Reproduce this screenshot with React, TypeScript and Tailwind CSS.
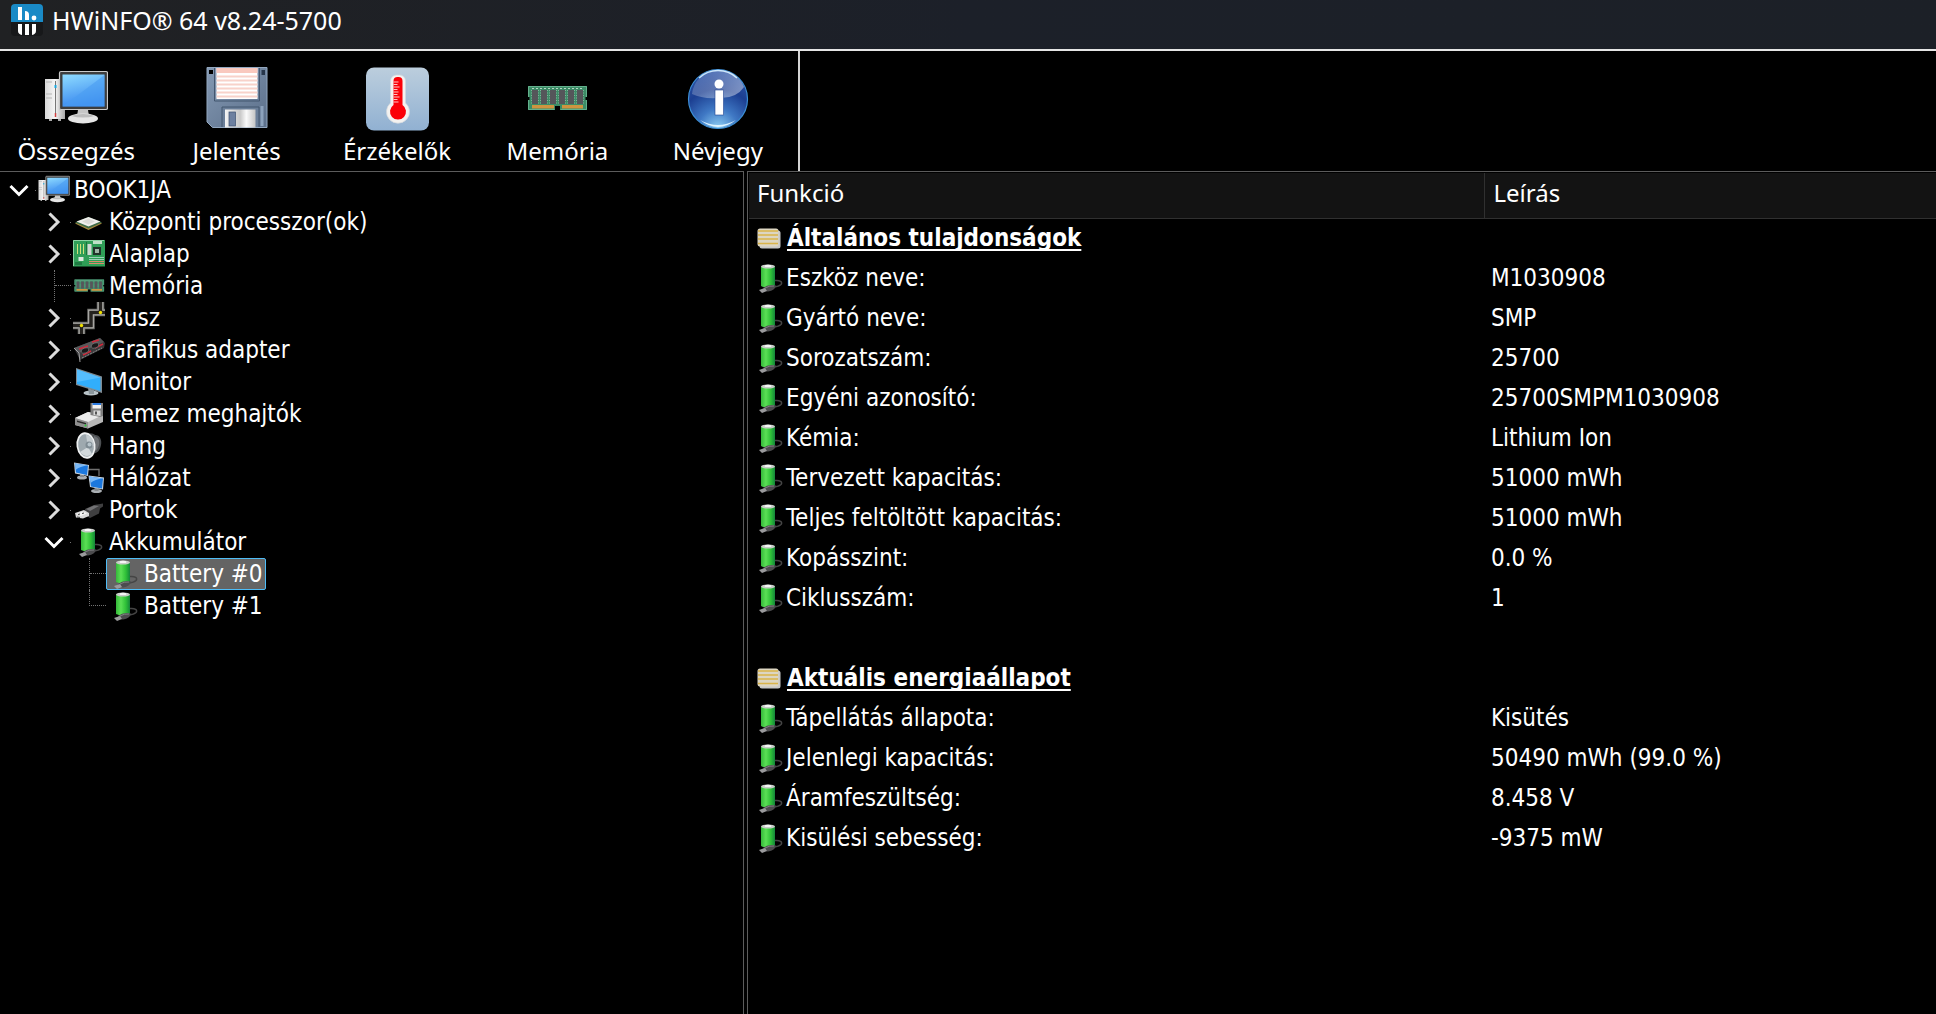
import { clsx } from "clsx";
import { Fragment, type ReactNode } from "react";

interface TreeNode {
  label: string;
  icon: ReactNode;
  expanded?: boolean;
  selected?: boolean;
  branch?: boolean;
  children?: TreeNode[];
}

interface PropertyGroup {
  title: string;
  rows: [string, string][];
}

function LogoIcon() {
  return (
    <svg className="size-8" viewBox="0 0 32 32" aria-hidden="true">
      <path d="M0 18V4a4 4 0 0 1 4-4h24a4 4 0 0 1 4 4v14z" fill="#1a8ac6" />
      <path d="M0 18h32v10a4 4 0 0 1-4 4H4a4 4 0 0 1-4-4z" fill="#17181a" />
      <rect x="7" y="3" width="4" height="13" fill="#fff" />
      <path d="M14 16V7q4 0 4 4v5z" fill="#fff" />
      <circle cx="23" cy="14" r="2.4" fill="#fff" />
      <path d="M7 20h4v11q-4-1-4-4zM14 20h4v11h-4zM21 20h4v7q0 3-4 4z" fill="#fff" />
    </svg>
  );
}

function ComputerIcon({ className }: { className: string }) {
  return (
    <svg className={className} viewBox="0 0 64 64" aria-hidden="true">
      <defs>
        <linearGradient id="pc-screen" x1="0" y1="0" x2="0.3" y2="1">
          <stop offset="0" stopColor="#8fdcff" />
          <stop offset="1" stopColor="#3b8af0" />
        </linearGradient>
        <linearGradient id="pc-tower" x1="0" y1="0" x2="1" y2="0">
          <stop offset="0" stopColor="#d8d8d8" />
          <stop offset="0.5" stopColor="#f6f6f6" />
          <stop offset="1" stopColor="#a8a8a8" />
        </linearGradient>
      </defs>
      <rect x="1" y="12" width="20" height="40" fill="url(#pc-tower)" />
      <path d="M2 15h6M2 27h6M2 31h6" stroke="#b5b5b5" />
      <path d="M11.500 14v34" stroke="#777" />
      <path d="M11.500 18v3" stroke="#18a8e0" strokeWidth="2" />
      <path d="M11.500 46v4" stroke="#d04040" strokeWidth="1.500" />
      <path d="M5 52h3v2H5zM14 52h3v2h-3z" fill="#aaa" />
      <path d="M34 43h10l1 6H33z" fill="#c6c6c6" />
      <ellipse cx="39" cy="51.500" rx="15" ry="5" fill="#e6e6e6" />
      <path d="M27 49q12-4 24 0q-12 3-24 0z" fill="#bdbdbd" />
      <rect x="15.500" y="4.500" width="48" height="38" rx="1.500" fill="#3d3d3d" stroke="#c9c9c9" strokeWidth="1.200" />
      <rect x="18.500" y="7.500" width="42" height="32" fill="url(#pc-screen)" />
      <path d="M18.500 39.500L60.500 8v31.500z" fill="#4a9df2" opacity="0.600" />
    </svg>
  );
}

function ReportIcon() {
  return (
    <svg className="size-16" viewBox="0 0 64 64" aria-hidden="true">
      <defs>
        <linearGradient id="floppy-body" x1="0" y1="0" x2="1" y2="1">
          <stop offset="0" stopColor="#8499b3" />
          <stop offset="1" stopColor="#5b6f8a" />
        </linearGradient>
        <linearGradient id="floppy-shutter" x1="0" y1="0" x2="1" y2="0">
          <stop offset="0" stopColor="#f4f4f4" />
          <stop offset="0.500" stopColor="#c9c9c9" />
          <stop offset="0.700" stopColor="#fafafa" />
          <stop offset="1" stopColor="#c4c4c4" />
        </linearGradient>
      </defs>
      <path d="M2 .5h60v60H7.500L2 55z" fill="url(#floppy-body)" stroke="#93a8c0" />
      <path d="M9.500 1v33h45V1" fill="none" stroke="#43566f" />
      <rect x="4" y="3" width="4" height="4" fill="#000" />
      <rect x="56.500" y="3" width="3.500" height="5" fill="#27364a" />
      <rect x="11.500" y="1" width="41" height="31" fill="#fff" />
      <rect x="11.500" y="1" width="41" height="5" fill="#f9c9bf" />
      <path d="M11.500 9.500h41M11.500 13.500h41M11.500 17.500h41M11.500 21.500h41M11.500 25.500h41M11.500 29.500h41" stroke="#f8d2ca" strokeWidth="1.800" />
      <path d="M17 60V40h37v20" fill="#6b7f99" stroke="#43566f" />
      <path d="M57 39v20" stroke="#8ca2bc" strokeWidth="3" />
      <rect x="20" y="42.500" width="30.500" height="18" fill="url(#floppy-shutter)" />
      <rect x="24" y="45" width="6.500" height="14" fill="#6d80a0" stroke="#3c5070" strokeWidth="0.700" />
    </svg>
  );
}

function SensorIcon() {
  return (
    <svg className="size-16" viewBox="0 0 64 64" aria-hidden="true">
      <defs>
        <linearGradient id="sensor-bg" x1="0" y1="0" x2="0" y2="1">
          <stop offset="0" stopColor="#bccedd" />
          <stop offset="1" stopColor="#91b1d2" />
        </linearGradient>
      </defs>
      <rect x="1" y="0.500" width="63" height="63" rx="8" fill="url(#sensor-bg)" />
      <path d="M25.500 14a6 6 0 0 1 6-6h3a6 6 0 0 1 6 6v22a11.500 11.500 0 1 1-15 0z" fill="#f4f2f0" stroke="#d2d8de" strokeWidth="0.700" />
      <path d="M28.500 14a4 4 0 0 1 4-4h1a4 4 0 0 1 4 4v24a8 8 0 1 1-9 0z" fill="#fb0007" />
      <path d="M28.500 15h5M28.500 17.500h4M28.500 20h6M28.500 22.500h4M28.500 25h5M28.500 27.500h4M28.500 30h6M28.500 32.500h4M28.500 35h5" stroke="#ffc4c4" />
    </svg>
  );
}

function MemoryIcon({ className }: { className: string }) {
  return (
    <svg className={className} viewBox="0 0 64 64" aria-hidden="true">
      <path d="M3 19h59v11h-1.500v3H62v10H35v-4h-5v4H3V33h1.500v-3H3z" fill="#3c8c66" />
      <path d="M3.500 30V19.500h58V30M3.500 33v9.500h26M35.500 42.500h26V33" fill="none" stroke="#63b08c" />
      <path d="M7 21.500h52" stroke="#b5d6c4" strokeDasharray="2 2" />
      <g fill="#55565a">
        <rect x="7" y="23" width="6" height="14" />
        <rect x="16" y="23" width="6" height="14" />
        <rect x="25" y="23" width="6" height="14" />
        <rect x="34" y="23" width="6" height="14" />
        <rect x="43" y="23" width="6" height="14" />
        <rect x="52" y="23" width="6" height="14" />
      </g>
      <path
        d="M6.500 23v14M13.500 23v14M15.500 23v14M22.500 23v14M24.500 23v14M31.500 23v14M33.500 23v14M40.500 23v14M42.500 23v14M49.500 23v14M51.500 23v14M58.500 23v14"
        stroke="#7fb399"
        strokeDasharray="1 1.500"
      />
      <path d="M7 38h22v3.500H7zM37 38h21v3.500H37z" fill="#cf9440" />
    </svg>
  );
}

function AboutIcon() {
  return (
    <svg className="size-16" viewBox="0 0 64 64" aria-hidden="true">
      <defs>
        <radialGradient id="about-bg" cx="0.500" cy="1" r="0.950">
          <stop offset="0" stopColor="#8fd0f5" />
          <stop offset="0.350" stopColor="#3f78c4" />
          <stop offset="0.700" stopColor="#1c3f92" />
          <stop offset="1" stopColor="#2c53a6" />
        </radialGradient>
        <linearGradient id="about-gloss" x1="0" y1="0" x2="1" y2="0.600">
          <stop offset="0" stopColor="#ffffff" stopOpacity="0.100" />
          <stop offset="1" stopColor="#ffffff" stopOpacity="0.400" />
        </linearGradient>
      </defs>
      <circle cx="32" cy="32" r="29.500" fill="url(#about-bg)" stroke="#3d8fd6" strokeWidth="1.200" />
      <path d="M13 11a28 28 0 0 1 38 0" fill="none" stroke="#bfe2fb" strokeWidth="1.500" />
      <path d="M6 27A27 27 0 0 1 58 20Q50 32 32 31Q16 32 6 27z" fill="url(#about-gloss)" />
      <path d="M14 53q18 10 36 0q-18 14-36 0z" fill="#dff4ff" />
      <circle cx="33" cy="17" r="4.500" fill="#fff" />
      <rect x="29" y="23" width="8.500" height="25" fill="#fff" stroke="#21448f" strokeWidth="0.600" />
    </svg>
  );
}

function CpuIcon() {
  return (
    <svg className="size-8" viewBox="0 0 32 32" aria-hidden="true">
      <path d="M2 17.500L15.500 24 29 17.500 15.500 12z" fill="#a8873c" />
      <path d="M2 16.500L15.500 22.500 29 16.500 15.500 11z" fill="#3e6a46" />
      <path d="M3.500 15.500L15.500 20.500 27.500 15.500 15.500 11z" fill="#f0efec" />
      <path d="M9 15.500l6.500 3 6.500-3-6.500-3z" fill="#dcdad6" />
    </svg>
  );
}

function BoardIcon() {
  return (
    <svg className="size-8" viewBox="0 0 32 32" aria-hidden="true">
      <rect y="2" width="32" height="26.500" fill="#2f9e57" />
      <path d="M.5 28V2.500H31" fill="none" stroke="#8ed3a4" />
      <path d="M4.500 6v10M7.500 6v10M10.500 6v10" stroke="#cfe07a" />
      <path d="M13.500 4v13" stroke="#1c6f3b" />
      <rect x="14.500" y="6" width="4" height="11" fill="#cfd8d2" />
      <rect x="20" y="3" width="9" height="3" fill="#bfe0c8" />
      <rect x="20" y="9" width="8" height="8" fill="#20332a" />
      <rect x="22" y="11" width="4" height="4" fill="#9db5a6" />
      <rect x="5.500" y="19" width="5" height="4" fill="#dbe8de" />
      <rect x="2" y="24" width="7" height="3" fill="#1f7a42" />
      <path d="M16 19.500h15M16 21.500h15" stroke="#9ad2b8" />
      <path d="M16 23.500h15M16 25.500h15" stroke="#d98a6b" />
    </svg>
  );
}

function BusIcon() {
  return (
    <svg className="size-8" viewBox="0 0 32 32" fill="none" aria-hidden="true">
      <g stroke="#6f6f6c" strokeWidth="7.500">
        <path d="M0 23.500h18V10.500h14" />
        <path d="M27.500 0v10M8.500 32v-8" />
      </g>
      <g stroke="#b9b8b4" strokeWidth="5.500">
        <path d="M0 23.500h18V10.500h14" />
        <path d="M27.500 0v10M8.500 32v-8" />
      </g>
      <g stroke="#24221f" strokeWidth="3.500">
        <path d="M0 23.500h18V10.500h14" />
        <path d="M27.500 0v10M8.500 32v-8" />
      </g>
      <circle cx="8.500" cy="23.500" r="1.700" fill="#efe000" />
      <circle cx="27.500" cy="10.500" r="1.700" fill="#efe000" />
    </svg>
  );
}

function GpuIcon() {
  return (
    <svg className="size-8" viewBox="0 0 32 32" fill="none" aria-hidden="true">
      <path d="M1 14L27 4l5 5-1 5L7 26z" fill="#3a3a3c" />
      <path d="M1 14L27 4l4 4L6 19z" fill="#58585a" />
      <path d="M1 14l5 5 1 9" stroke="#a0a0a0" />
      <path d="M6 15l9-3M19 8l7-2M10 21l8-4M22 14l8-4" stroke="#d0283a" strokeWidth="1.500" />
      <path d="M9 24l20-10" stroke="#8b8b8b" strokeDasharray="2 1" />
      <ellipse cx="12" cy="16.500" rx="4" ry="2.500" fill="#19191a" stroke="#838383" strokeWidth="0.600" transform="rotate(-20 12 16.500)" />
      <ellipse cx="22" cy="11.500" rx="4" ry="2.500" fill="#19191a" stroke="#838383" strokeWidth="0.600" transform="rotate(-20 22 11.500)" />
    </svg>
  );
}

function MonitorIcon() {
  return (
    <svg className="size-8" viewBox="0 0 32 32" aria-hidden="true">
      <ellipse cx="18" cy="27" rx="7.500" ry="2.500" fill="#b9c3c8" />
      <path d="M15 22l6 2v4h-5z" fill="#8b979d" />
      <path d="M3 2l26 8.500V27L3 19z" fill="#7f8b93" />
      <path d="M4 3.500l23.500 8V25L4 18z" fill="#31aefc" />
      <path d="M4 3.500l23.500 8L4 16z" fill="#55bdfd" />
    </svg>
  );
}

function DriveIcon() {
  return (
    <svg className="size-8" viewBox="0 0 32 32" aria-hidden="true">
      <path d="M2 20L15 14l15 3v7l-15 6.500L2 27z" fill="#b7b7b7" />
      <path d="M2 20L15 14l15 3-15 7z" fill="#eaeaea" />
      <path d="M2 20l13 4v6.500L2 27z" fill="#8f8f8f" />
      <path d="M4 22.500l9 2.500v1.500L4 24z" fill="#2a2a2a" />
      <circle cx="12.500" cy="27.500" r="1" fill="#25d336" />
      <path d="M17.500 5H30v13l-3 1-9.500-2z" fill="#7d7d7d" />
      <path d="M19.500 5h8.500v5.500h-8.500z" fill="#f2f2f2" />
      <path d="M19.500 5h8.500v2h-8.500z" fill="#2c7be0" />
      <path d="M20.500 12.500h7v5.500l-7-1z" fill="#d8d8d8" />
      <path d="M22 13.500h2v3h-2z" fill="#555" />
    </svg>
  );
}

function SoundIcon() {
  return (
    <svg className="size-8" viewBox="0 0 32 32" aria-hidden="true">
      <path d="M13 3q8 0 9 2c5 0 7 5 6 10-1 6-4 8-8 9z" fill="#4c4f52" />
      <path d="M21 6c4 1 6 4 5 9-1 4-3 6-5 7z" fill="#6c7074" />
      <ellipse cx="13" cy="15.500" rx="9.500" ry="13.300" fill="#eef0f1" transform="rotate(-8 13 15.500)" />
      <ellipse cx="13" cy="15.500" rx="7.800" ry="11.300" fill="#9ea9af" transform="rotate(-8 13 15.500)" />
      <path d="M13 5c5 0 8 6 8 11l-6 1z" fill="#c4ccd0" />
      <path d="M7 22l8-5 4 7q-6 5-12-2z" fill="#d2d9dc" />
      <circle cx="16" cy="15" r="3.500" fill="#7f8c94" />
      <circle cx="16.500" cy="14.500" r="2" fill="#b7c4cb" />
    </svg>
  );
}

function NetworkIcon() {
  return (
    <svg className="size-8" viewBox="0 0 32 32" aria-hidden="true">
      <path d="M15 7.500h11V14" fill="none" stroke="#6f6f6f" strokeWidth="1.300" />
      <ellipse cx="9" cy="15.500" rx="5" ry="2" fill="#a9aeb2" />
      <path d="M7 12h4v3H7z" fill="#85898c" />
      <path d="M1 .5l15 2.500-1 11L2 11.500z" fill="#c9d4de" />
      <path d="M2 1.500l13 2-1 9.500L3 10.500z" fill="#1c78de" />
      <path d="M2 1.500l13 2Q7 4 2.500 8z" fill="#7cb9f5" />
      <ellipse cx="23.500" cy="29" rx="5.500" ry="2" fill="#a9aeb2" />
      <path d="M21.500 25h4v4h-4z" fill="#85898c" />
      <path d="M15.500 13.500L31 15.500l-1 12-13-2.500z" fill="#c9d4de" />
      <path d="M16.500 14.500l13.500 2-1 10-11-2z" fill="#1c78de" />
      <path d="M16.500 14.500l13.500 2Q22 17 17.500 21z" fill="#7cb9f5" />
    </svg>
  );
}

function PortIcon() {
  return (
    <svg className="size-8" viewBox="0 0 32 32" aria-hidden="true">
      <path d="M12 15l9-4 9-1.500v3l-3 2-1 5-9 4.500-5-3z" fill="#3f3f40" />
      <path d="M13 15l8-3.500 5 .5-9 5z" fill="#727274" />
      <path d="M2 19l9-3 5 3v3l-6 2.500-7-1z" fill="#d9d9d9" />
      <path d="M3 20l7-2.500 4 2-6 2.500z" fill="#f5f5f5" />
      <path d="M5 20.500l2-.5M9 19.500l2-.5M4 23l3 .500" stroke="#444" />
    </svg>
  );
}

function BatteryIcon() {
  return (
    <svg className="size-8 shrink-0" viewBox="0 0 32 32" aria-hidden="true">
      <defs>
        <linearGradient id="cell" x1="0" y1="0" x2="1" y2="0">
          <stop offset="0" stopColor="#35b83a" />
          <stop offset="0.350" stopColor="#5be055" />
          <stop offset="0.700" stopColor="#2fc038" />
          <stop offset="1" stopColor="#14863a" />
        </linearGradient>
      </defs>
      <path d="M8 4.500V24q7 3.500 14 0V4.500z" fill="url(#cell)" />
      <ellipse cx="15" cy="4.500" rx="7" ry="2" fill="#c8cbc8" />
      <ellipse cx="15" cy="3.900" rx="3.500" ry="1.200" fill="#f5f5f5" />
      <path d="M22 18.500c5-.5 8 1.500 6 4q-2 2-7 2.500" fill="none" stroke="#454545" strokeWidth="1.500" />
      <path d="M10 26q5-4 13-2.500-1 5-8 6-4 0-5-3.500z" fill="#4c4c4e" />
      <path d="M12 26q4-2.500 9-2" fill="none" stroke="#808083" />
      <path d="M6 28l6-2 2 3-5 2z" fill="#9b9b9d" />
    </svg>
  );
}

function SheetIcon() {
  return (
    <svg className="size-8 shrink-0" viewBox="0 0 32 32" aria-hidden="true">
      <rect x="6.500" y="8.500" width="21" height="18" rx="2.500" fill="#c9c9c7" />
      <rect x="4.500" y="6.500" width="21" height="18" rx="2.500" fill="#ddd6c2" />
      <path d="M5 9h20M5 13h20M5 17h20M5 21.500h20" stroke="#d9b44a" strokeWidth="1.600" />
    </svg>
  );
}

const TOOLBAR = [
  { label: "Összegzés", icon: <ComputerIcon className="size-16" /> },
  { label: "Jelentés", icon: <ReportIcon /> },
  { label: "Érzékelők", icon: <SensorIcon /> },
  { label: "Memória", icon: <MemoryIcon className="size-16" /> },
  { label: "Névjegy", icon: <AboutIcon /> },
];

const TREE: TreeNode = {
  label: "BOOK1JA",
  icon: <ComputerIcon className="size-8" />,
  expanded: true,
  branch: true,
  children: [
    { label: "Központi processzor(ok)", icon: <CpuIcon />, branch: true },
    { label: "Alaplap", icon: <BoardIcon />, branch: true },
    { label: "Memória", icon: <MemoryIcon className="size-8" /> },
    { label: "Busz", icon: <BusIcon />, branch: true },
    { label: "Grafikus adapter", icon: <GpuIcon />, branch: true },
    { label: "Monitor", icon: <MonitorIcon />, branch: true },
    { label: "Lemez meghajtók", icon: <DriveIcon />, branch: true },
    { label: "Hang", icon: <SoundIcon />, branch: true },
    { label: "Hálózat", icon: <NetworkIcon />, branch: true },
    { label: "Portok", icon: <PortIcon />, branch: true },
    {
      label: "Akkumulátor",
      icon: <BatteryIcon />,
      branch: true,
      expanded: true,
      children: [
        { label: "Battery #0", icon: <BatteryIcon />, selected: true },
        { label: "Battery #1", icon: <BatteryIcon /> },
      ],
    },
  ],
};

const GROUPS: PropertyGroup[] = [
  {
    title: "Általános tulajdonságok",
    rows: [
      ["Eszköz neve:", "M1030908"],
      ["Gyártó neve:", "SMP"],
      ["Sorozatszám:", "25700"],
      ["Egyéni azonosító:", "25700SMPM1030908"],
      ["Kémia:", "Lithium Ion"],
      ["Tervezett kapacitás:", "51000 mWh"],
      ["Teljes feltöltött kapacitás:", "51000 mWh"],
      ["Kopásszint:", "0.0 %"],
      ["Ciklusszám:", "1"],
    ],
  },
  {
    title: "Aktuális energiaállapot",
    rows: [
      ["Tápellátás állapota:", "Kisütés"],
      ["Jelenlegi kapacitás:", "50490 mWh (99.0 %)"],
      ["Áramfeszültség:", "8.458 V"],
      ["Kisülési sebesség:", "-9375 mW"],
    ],
  },
];

function Expander({ node }: { node: TreeNode }) {
  return (
    <>
      <button
        type="button"
        aria-label={`${node.label} ${node.expanded ? "összecsukása" : "kibontása"}`}
        className="flex h-8 w-6 items-center justify-center"
      >
        <svg className="size-5" viewBox="0 0 20 20" fill="none" strokeWidth="3" aria-hidden="true">
          {node.expanded ? (
            <path d="M1.500 6l8.500 8.500L18.500 6" stroke="#fff" />
          ) : (
            <path d="M5.500 1.500l8.500 8.500L5.500 18.500" stroke="#dcdcdc" />
          )}
        </svg>
      </button>
      <span className="ml-1 w-px border-b border-dotted border-neutral-500" />
    </>
  );
}

function LeafConnector({ last }: { last: boolean }) {
  return (
    <span
      className={clsx(
        "ml-3 w-[17px] border-l border-dotted border-neutral-500",
        last ? "h-4 self-start border-b" : "h-8"
      )}
    >
      {!last && <span className="block h-4 border-b border-dotted border-neutral-500" />}
    </span>
  );
}

function TreeItem({ node, last = false }: { node: TreeNode; last?: boolean }) {
  return (
    <li role="treeitem" aria-expanded={node.branch ? !!node.expanded : undefined} aria-selected={!!node.selected}>
      <div className="flex h-8 items-center">
        {node.branch ? <Expander node={node} /> : <LeafConnector last={last} />}
        <span
          className={clsx(
            "flex h-8 items-center gap-1 rounded-xs border pr-0.5 pl-px whitespace-nowrap",
            node.selected ? "border-[#4fbdf7] bg-[#646464]" : "border-transparent"
          )}
        >
          {node.icon}
          {node.label}
        </span>
      </div>
      {node.expanded && node.children && (
        <ul role="group" className="pl-[35px]">
          {node.children.map((child, index) => (
            <TreeItem
              key={child.label}
              node={child}
              last={!child.branch && index === node.children!.length - 1}
            />
          ))}
        </ul>
      )}
    </li>
  );
}

function PropertyTable() {
  return (
    <table className="w-full table-fixed border-collapse text-left leading-8">
      <thead>
        <tr className="h-[45px] border-b border-[#303030] bg-[#131313] font-['Noto_Sans',sans-serif]">
          <th scope="col" className="w-[62%] border-r border-[#303030] px-2 pb-1 font-normal">
            Funkció
          </th>
          <th scope="col" className="px-2 pb-1 font-normal">
            Leírás
          </th>
        </tr>
      </thead>
      <tbody>
        {GROUPS.map((group, index) => (
          <Fragment key={group.title}>
            {index > 0 && (
              <tr className="h-10">
                <td colSpan={2} />
              </tr>
            )}
            <tr className="h-10">
              <th scope="rowgroup" colSpan={2} className="p-0 pl-1 font-bold">
                <span className="flex items-center gap-0.5">
                  <SheetIcon />
                  <span className="underline decoration-2 underline-offset-[3px] [text-decoration-skip-ink:none]">
                    {group.title}
                  </span>
                </span>
              </th>
            </tr>
            {group.rows.map(([name, value]) => (
              <tr key={name} className="h-10">
                <td className="p-0 pl-1">
                  <span className="flex items-center gap-px">
                    <BatteryIcon />
                    {name}
                  </span>
                </td>
                <td className="p-0 pl-1.5">{value}</td>
              </tr>
            ))}
          </Fragment>
        ))}
      </tbody>
    </table>
  );
}

export default function App() {
  return (
    <div className="flex min-h-screen flex-col overflow-hidden bg-black font-['DejaVu_Sans_Condensed','DejaVu_Sans',sans-serif] text-[24px] text-white">
      <header className="flex items-center gap-[9px] border-b-2 border-neutral-200 bg-linear-to-r from-[#202123] via-[#1c2029] to-[#1c2027] px-[11px] pt-1 pb-[13px]">
        <LogoIcon />
        <h1 className="font-['Noto_Sans',sans-serif] text-[25px] leading-8">HWiNFO® 64 v8.24-5700</h1>
      </header>

      <nav className="-ml-1 grid w-[804px] grid-cols-5 border-r-2 border-neutral-300">
        {TOOLBAR.map(({ label, icon }) => (
          <button
            key={label}
            type="button"
            className="flex flex-col items-center gap-1 pt-4 pb-1 font-['Noto_Sans',sans-serif] leading-8"
          >
            {icon}
            {label}
          </button>
        ))}
      </nav>

      <main className="flex flex-1 gap-[3px]">
        <aside className="w-[744px] shrink-0 border-t border-r border-[#5c5c5c] pt-0.5 pl-[7px]">
          <ul role="tree" aria-label="Hardver">
            <TreeItem node={TREE} />
          </ul>
        </aside>
        <section className="min-w-0 flex-1 border-t border-l border-[#5c5c5c] pt-px pl-px">
          <PropertyTable />
        </section>
      </main>
    </div>
  );
}
